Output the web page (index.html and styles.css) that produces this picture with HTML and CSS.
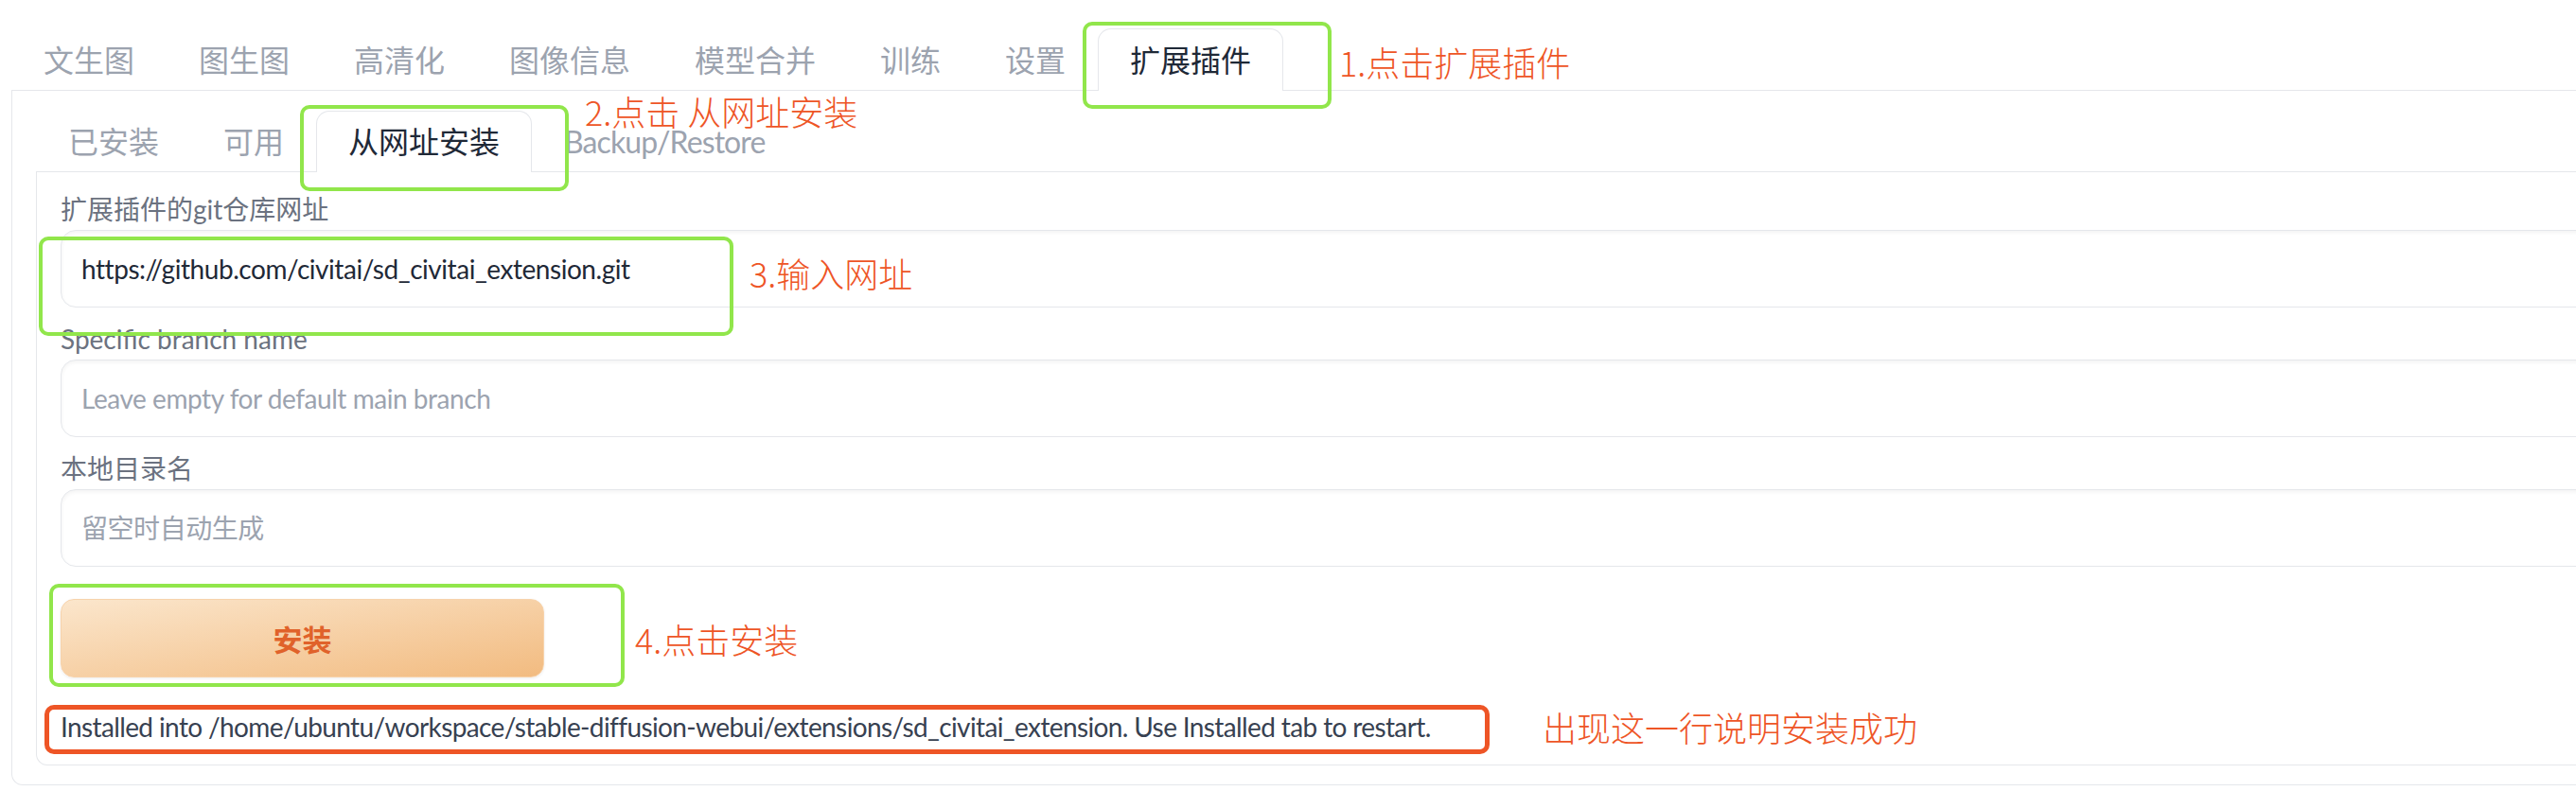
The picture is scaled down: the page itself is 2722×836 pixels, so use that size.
FILE: index.html
```html
<!DOCTYPE html>
<html lang="zh-CN">
<head>
<meta charset="utf-8">
<title>扩展插件 - 从网址安装</title>
<link rel="stylesheet" href="styles.css">
</head>
<body>
<div class="app">
  <div class="tabs">
    <nav class="tab-nav top-nav">
      <button class="tab">文生图</button>
      <button class="tab">图生图</button>
      <button class="tab">高清化</button>
      <button class="tab">图像信息</button>
      <button class="tab">模型合并</button>
      <button class="tab">训练</button>
      <button class="tab">设置</button>
      <button class="tab selected">扩展插件</button>
    </nav>
    <div class="panel outer">
      <nav class="tab-nav inner-nav">
        <button class="tab">已安装</button>
        <button class="tab">可用</button>
        <button class="tab selected">从网址安装</button>
        <button class="tab latin">Backup/Restore</button>
      </nav>
      <div class="panel inner">
        <label class="field">
          <span class="label">扩展插件的git仓库网址</span>
          <input class="textbox" type="text" value="https://github.com/civitai/sd_civitai_extension.git">
        </label>
        <label class="field">
          <span class="label">Specific branch name</span>
          <input class="textbox" type="text" placeholder="Leave empty for default main branch">
        </label>
        <label class="field">
          <span class="label">本地目录名</span>
          <input class="textbox" type="text" placeholder="留空时自动生成">
        </label>
        <button class="primary">安装</button>
        <div class="result">Installed into /home/ubuntu/workspace/stable-diffusion-webui/extensions/sd_civitai_extension. Use Installed tab to restart.</div>
      </div>
    </div>
  </div>

  <div class="mark mark-1"></div>
  <div class="mark mark-2"></div>
  <div class="mark mark-3"></div>
  <div class="mark mark-4"></div>
  <div class="mark mark-result"></div>

  <div class="note note-1">1.点击扩展插件</div>
  <div class="note note-2">2.点击 从网址安装</div>
  <div class="note note-3">3.输入网址</div>
  <div class="note note-4">4.点击安装</div>
  <div class="note note-5">出现这一行说明安装成功</div>
</div>
</body>
</html>
```

FILE: styles.css
```css
html, body {
  margin: 0;
  padding: 0;
  background: #ffffff;
}

body {
  overflow: hidden;
  font-family: "Lato", "Noto Sans CJK SC", sans-serif;
}

.app {
  position: relative;
  box-sizing: border-box;
  width: 2800px;
  padding: 30px 0 0 12px;
}

/* ---------- tabs ---------- */
.tab-nav {
  display: flex;
  border-bottom: 1px solid #e5e7eb;
}

.tab {
  display: flex;
  align-items: center;
  box-sizing: border-box;
  margin: 0 0 -1px 0;
  padding: 0 33px;
  border: 1px solid transparent;
  border-bottom: none;
  border-radius: 14px 14px 0 0;
  background: none;
  font-family: "Lato", "Noto Sans CJK SC", sans-serif;
  font-size: 32px;
  line-height: 0.85;
  color: #9ca3af;
  white-space: nowrap;
  cursor: pointer;
}

.tab.latin {
  letter-spacing: -0.9px;
}

.top-nav .tab {
  height: 66px;
}

.inner-nav .tab {
  height: 65px;
}

.tab.selected {
  border-color: #e5e7eb;
  background: #ffffff;
  color: #1f2937;
}

/* ---------- panels ---------- */
.panel {
  border: 1px solid #e5e7eb;
  border-top: none;
  border-radius: 0 0 12px 12px;
  background: #ffffff;
}

.outer {
  padding: 21px 0 20px 25px;
}

.inner {
  display: flex;
  flex-direction: column;
  align-items: flex-start;
  padding: 21px 0 20px 25px;
}

/* ---------- fields ---------- */
.field {
  display: flex;
  flex-direction: column;
  width: 100%;
}

.field + .field {
  margin-top: 15px;
}

.label {
  font-size: 28px;
  line-height: 36px;
  margin-bottom: 4px;
  color: #6b7280;
}

.textbox {
  box-sizing: border-box;
  width: 100%;
  height: 82px;
  margin: 0;
  padding: 0 21px;
  border: 1px solid #e5e7eb;
  border-radius: 16px;
  background: #ffffff;
  box-shadow: inset 0 2px 4px rgba(0, 0, 0, 0.05);
  font-family: "Lato", "Noto Sans CJK SC", sans-serif;
  font-size: 28px;
  letter-spacing: -0.45px;
  color: #1f2937;
  outline: none;
}

.textbox::placeholder {
  color: #9ca3af;
}

/* ---------- button ---------- */
.primary {
  box-sizing: border-box;
  width: 511px;
  height: 83px;
  margin-top: 34px;
  border: 1px solid #f7d3ac;
  border-radius: 14px;
  background: linear-gradient(to bottom right, #fbe6cc, #f2bb80);
  box-shadow: 0 1px 3px rgba(0, 0, 0, 0.08);
  font-family: "Noto Sans CJK SC", sans-serif;
  font-size: 31px;
  font-weight: 700;
  color: #e0622a;
  cursor: pointer;
}

.result {
  margin-top: 32px;
  font-size: 28px;
  line-height: 40px;
  letter-spacing: -0.62px;
  color: #374151;
  white-space: nowrap;
}

/* ---------- annotations (overlay) ---------- */
.mark {
  position: absolute;
  box-sizing: border-box;
  border: 4px solid #91e64b;
  border-radius: 10px;
}

.mark-1 { left: 1144px; top: 23px;  width: 263px; height: 92px; }
.mark-2 { left: 317px;  top: 111px; width: 284px; height: 91px; }
.mark-3 { left: 41px;   top: 250px; width: 734px; height: 105px; }
.mark-4 { left: 52px;   top: 617px; width: 608px; height: 109px; }

.mark-result {
  left: 47px;
  top: 745px;
  width: 1527px;
  height: 52px;
  border: 5px solid #ee5526;
}

.note {
  position: absolute;
  font-family: "Noto Sans CJK SC", sans-serif;
  font-weight: 300;
  font-size: 36px;
  line-height: 26px;
  color: #ee5526;
  white-space: nowrap;
}

.note-1 { left: 1415px; top: 52px; }
.note-2 { left: 618px;  top: 104px; }
.note-3 { left: 792px;  top: 275px; }
.note-4 { left: 671px;  top: 662px; }
.note-5 { left: 1630px; top: 755px; }
```
